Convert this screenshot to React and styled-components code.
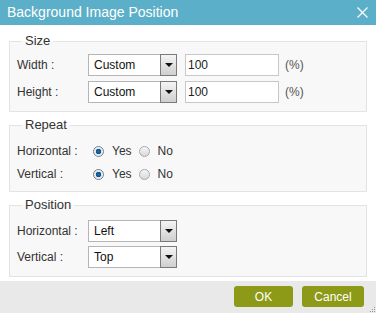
import React from "react";
import styled, { createGlobalStyle } from "styled-components";

const GlobalStyle = createGlobalStyle`
  html, body {
    margin: 0;
    padding: 0;
    background: #fff;
  }
  body {
    font-family: "Liberation Sans", Arial, sans-serif;
  }
`;

const Dialog = styled.div`
  width: 376px;
  height: 313px;
  display: flex;
  flex-direction: column;
  background: #fff;
  overflow: hidden;
`;

const TitleBar = styled.div`
  height: 25px;
  flex: 0 0 25px;
  background: #5bafc8;
  display: flex;
  align-items: center;
  justify-content: space-between;
  padding: 0 8px 0 7px;
  box-sizing: border-box;
`;

const Title = styled.div`
  color: #fff;
  font-size: 14px;
  line-height: 25px;
`;

const CloseBtn = styled.svg`
  width: 11px;
  height: 11px;
  display: block;
`;

const Body = styled.div`
  flex: 1;
  padding: 9px 9px 0 9px;
  display: flex;
  flex-direction: column;
  gap: 6px;
`;

const Fieldset = styled.fieldset`
  margin: 0;
  padding: ${(p) => p.pad || "6px 7px 8px 7px"};
  border: 1px solid #e3e3e3;
  background: #f8f8f8;
  display: flex;
  flex-direction: column;
  gap: ${(p) => p.gap || "5px"};
  min-width: 0;
`;

const Legend = styled.legend`
  font-size: 13px;
  line-height: 14px;
  color: #333;
  padding: 0 3px;
  margin-left: 5px;
`;

const Row = styled.div`
  display: flex;
  align-items: center;
  height: ${(p) => p.h || "22px"};
`;

const Label = styled.div`
  width: 71px;
  flex: 0 0 71px;
  font-size: 12px;
  color: #333;
`;

const SelectBox = styled.div`
  width: 89px;
  height: 22px;
  box-sizing: border-box;
  border: 1px solid #b5b5b5;
  border-right: none;
  background: #fff;
  display: flex;
  align-items: center;
  justify-content: space-between;
  font-size: 12px;
  color: #111;
  padding-left: 5px;
`;

const Arrow = styled.div`
  width: 17px;
  height: 22px;
  margin-top: -1px;
  margin-bottom: -1px;
  box-sizing: border-box;
  border: 1px solid #7a7a7a;
  background: linear-gradient(#f4f4f4, #cfcfcf);
  display: flex;
  align-items: center;
  justify-content: center;

  &::after {
    content: "";
    width: 0;
    height: 0;
    border-left: 4px solid transparent;
    border-right: 4px solid transparent;
    border-top: 4px solid #111;
  }
`;

const TextInput = styled.div`
  width: 94px;
  height: 22px;
  box-sizing: border-box;
  border: 1px solid #c8c8c8;
  background: #fff;
  margin-left: 8px;
  padding-left: 2px;
  display: flex;
  align-items: center;
  font-size: 12px;
  color: #222;
`;

const Unit = styled.span`
  margin-left: 6px;
  font-size: 12px;
  color: #555;
`;

const RadioGroup = styled.div`
  display: flex;
  align-items: center;
  margin-left: 5px;
`;

const Radio = styled.span`
  width: 11px;
  height: 11px;
  box-sizing: border-box;
  border-radius: 50%;
  border: 1px solid ${(p) => (p.checked ? "#6f7f8f" : "#a9a9a9")};
  background: ${(p) =>
    p.checked
      ? "radial-gradient(circle, #1d6fb0 0, #0c4f86 2.5px, #dfe6ec 3px, #f7f7f7 5px)"
      : "linear-gradient(#f6f6f6, #d8d8d8)"};
  display: inline-block;
`;

const RadioText = styled.span`
  font-size: 12px;
  color: #333;
  margin-left: 8px;
  margin-right: 7px;
`;

const Footer = styled.div`
  flex: 0 0 32px;
  height: 32px;
  margin-top: 2px;
  background: #e9e9e9;
  display: flex;
  justify-content: flex-end;
  align-items: flex-start;
  padding: 5px 12px 0 0;
  box-sizing: border-box;
  gap: 9px;
  position: relative;
`;

const Button = styled.button`
  height: 21px;
  width: ${(p) => p.w || "60px"};
  border: none;
  border-radius: 3px;
  background: #8c9a17;
  color: #fff;
  font-family: "Liberation Sans", Arial, sans-serif;
  font-size: 12px;
  padding: 0;
`;

const Grip = styled.svg`
  position: absolute;
  right: 1px;
  bottom: 1px;
  width: 5px;
  height: 5px;
`;

const Select = ({ value }) => (
  <SelectBox>
    {value}
    <Arrow />
  </SelectBox>
);

const RadioRow = ({ label }) => (
  <Row h="20px">
    <Label>{label}</Label>
    <RadioGroup>
      <Radio checked />
      <RadioText>Yes</RadioText>
      <Radio />
      <RadioText>No</RadioText>
    </RadioGroup>
  </Row>
);

export default function App() {
  return (
    <Dialog>
      <GlobalStyle />
      <TitleBar>
        <Title>Background Image Position</Title>
        <CloseBtn viewBox="0 0 11 11">
          <path d="M0.5 0.5 L10.5 10.5 M10.5 0.5 L0.5 10.5" stroke="#fff" strokeWidth="1.2" />
        </CloseBtn>
      </TitleBar>
      <Body>
        <Fieldset>
          <Legend>Size</Legend>
          <Row>
            <Label>Width :</Label>
            <Select value="Custom" />
            <TextInput>100</TextInput>
            <Unit>(%)</Unit>
          </Row>
          <Row>
            <Label>Height :</Label>
            <Select value="Custom" />
            <TextInput>100</TextInput>
            <Unit>(%)</Unit>
          </Row>
        </Fieldset>
        <Fieldset pad="9px 7px 7px 7px" gap="3px">
          <Legend>Repeat</Legend>
          <RadioRow label="Horizontal :" />
          <RadioRow label="Vertical :" />
        </Fieldset>
        <Fieldset pad="8px 7px 8px 7px" gap="4px">
          <Legend>Position</Legend>
          <Row>
            <Label>Horizontal :</Label>
            <Select value="Left" />
          </Row>
          <Row>
            <Label>Vertical :</Label>
            <Select value="Top" />
          </Row>
        </Fieldset>
      </Body>
      <Footer>
        <Button w="59px">OK</Button>
        <Button w="62px">Cancel</Button>
        <Grip viewBox="0 0 5 5">
          <rect x="4" y="0" width="1" height="1" fill="#999" />
          <rect x="2" y="2" width="1" height="1" fill="#999" />
          <rect x="4" y="2" width="1" height="1" fill="#999" />
          <rect x="0" y="4" width="1" height="1" fill="#999" />
          <rect x="2" y="4" width="1" height="1" fill="#999" />
          <rect x="4" y="4" width="1" height="1" fill="#999" />
        </Grip>
      </Footer>
    </Dialog>
  );
}
